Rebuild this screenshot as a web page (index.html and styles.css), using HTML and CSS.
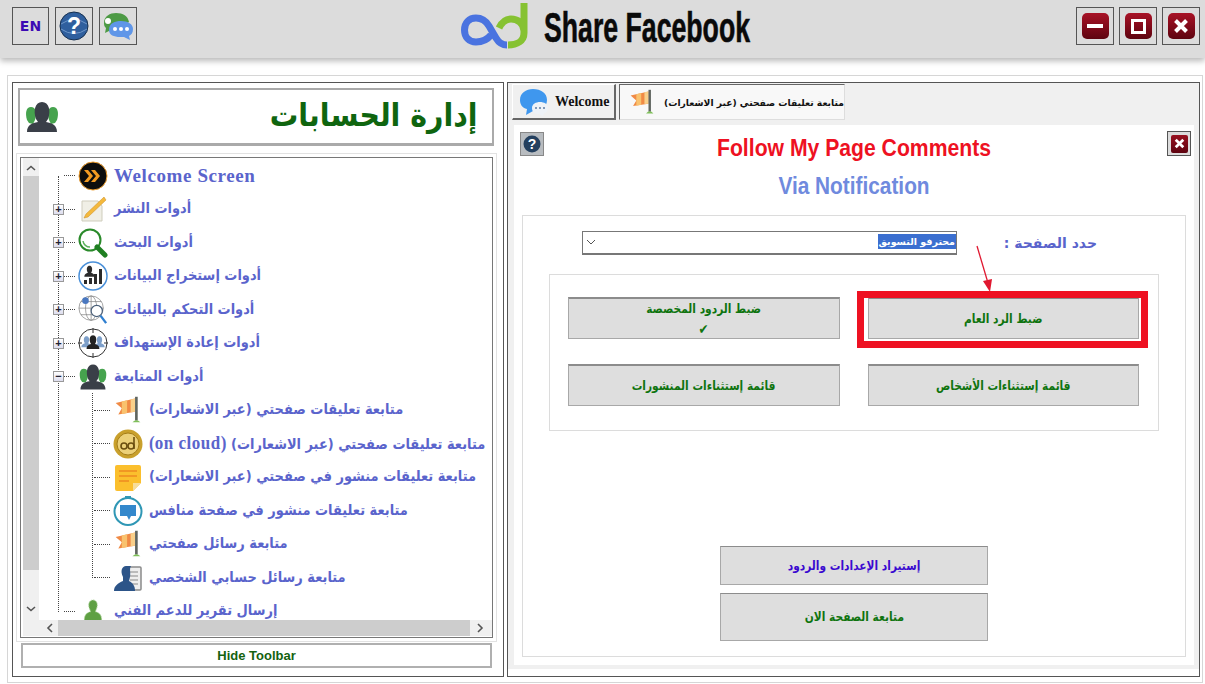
FILE: index.html
```html
<!DOCTYPE html>
<html lang="en">
<head>
  <meta charset="UTF-8">
  <title>Share Facebook</title>
  <link rel="stylesheet" href="styles.css">
</head>
<body>
  <svg class="defs" width="0" height="0">
    <symbol id="flag" viewBox="-2 -1 34 32">
      <path d="M1 7 L23 2 V17 L4 20 L8 13 Z" fill="#f08a45"/>
      <path d="M8 5.500 L14 4 V18.500 L8 19.500 Z" fill="#f9c26e"/>
      <path d="M18 3 L23 2 V17 L18 17.600 Z" fill="#f9d08a"/>
      <path d="M23 0 H26 V27 H23 Z" fill="#5f655f"/>
      <path d="M20 29 Q24.500 24 29 29 Z" fill="#7fc05a"/>
    </symbol>
    <symbol id="people" viewBox="0 0 36 32">
      <path d="M3 19 C1 12 2 6 7 6 C12 6 13 12 11 19 L9 23 L5 22 Z" fill="#46a34e"/>
      <path d="M25 19 C23 12 24 6 29 6 C34 6 35 12 33 19 L31 22 L27 23 Z" fill="#46a34e"/>
      <path d="M12 18 C9 10 11 1 18 1 C25 1 27 10 24 18 L22 21 C28 22 33 24 33 31 H3 C3 24 8 22 14 21 Z" fill="#3a3f48"/>
    </symbol>
    <symbol id="bust" viewBox="0 0 20 20">
      <path d="M6.500 10 C5 5 6.500 1 10 1 C13.500 1 15 5 13.500 10 L12.500 12 C15 13 18 14 18 18 H2 C2 14 5 13 7.500 12 Z"/>
    </symbol>
  </svg>

  <header class="top-bar">
    <div class="top-left">
      <button class="top-btn en-btn">EN</button>
      <button class="top-btn">
        <svg width="30" height="30" viewBox="0 0 30 30">
          <circle cx="15" cy="15" r="14" fill="#2f5f9e" stroke="#17304f"/>
          <path d="M2 13 Q15 4 28 13 M2 18 Q15 27 28 18" fill="none" stroke="#6f97c9"/>
          <text x="15" y="23" class="q-mark" fill="#fff">?</text>
        </svg>
      </button>
      <button class="top-btn">
        <svg width="32" height="30" viewBox="0 0 32 30">
          <path d="M2 12 C2 5 8 2 14 2 C21 2 26 5 27 11 L12 21 L7 20 L3 22 L4 17 C2.500 16 2 14 2 12 Z" fill="#4d9a45"/>
          <circle cx="6" cy="10" r="3" fill="#fff"/>
          <path d="M7 19 C7 12 13 10 19 10 C26 10 31 13 31 18 C31 22 29 24 27 25 L28 29 L22 26 H18 C12 26 7 24 7 19 Z" fill="#5f96e8"/>
          <circle cx="13" cy="18" r="2" fill="#fff"/><circle cx="19" cy="18" r="2" fill="#fff"/><circle cx="25" cy="18" r="2" fill="#fff"/>
        </svg>
      </button>
    </div>
    <div class="brand">
      <svg width="68" height="48" viewBox="0 0 68 48">
        <path d="M30 34 C26 39 21 41 15 41 C8 41 3.500 36 3.500 29 C3.500 22 8 17 15 17 C21 17 25 20 28 25 L35 37 C38 42 41 44 46 44" fill="none" stroke="#4a73e0" stroke-width="7"/>
        <path d="M38 27 C41 21 45 18 50 18 C56 18 63 22 63 30 M63 2 V32 C63 40 56 44 47 44" fill="none" stroke="#86c232" stroke-width="7"/>
      </svg>
      <span class="brand-name">Share Facebook</span>
    </div>
    <div class="top-right">
      <button class="win-btn"><span class="win-face"><span class="win-min"></span></span></button>
      <button class="win-btn"><span class="win-face"><span class="win-max"></span></span></button>
      <button class="win-btn"><span class="win-face">
        <svg width="16" height="16" viewBox="0 0 16 16"><path d="M2.500 2.500 L13.500 13.500 M13.500 2.500 L2.500 13.500" stroke="#fff" stroke-width="4"/></svg>
      </span></button>
    </div>
  </header>

  <main class="desk">
    <aside class="side">
      <div class="side-title">
        <svg width="36" height="32"><use href="#people"/></svg>
        <h1 dir="rtl">إدارة الحسابات</h1>
      </div>

      <div class="tree-box">
        <div class="v-scroll">
          <svg class="chev" width="10" height="6" viewBox="0 0 10 6"><path d="M1 5 L5 1.500 L9 5" fill="none" stroke="#555" stroke-width="1.600"/></svg>
          <div class="v-thumb"></div>
          <svg class="chev" width="10" height="6" viewBox="0 0 10 6"><path d="M1 1 L5 4.500 L9 1" fill="none" stroke="#555" stroke-width="1.600"/></svg>
        </div>

        <div class="tree">
          <div class="row">
            <span class="no-exp"></span><span class="dots"></span>
            <svg class="ico" width="30" height="30" viewBox="0 0 30 30">
              <circle cx="15" cy="15" r="14" fill="#0d0d0d" stroke="#f0a030"/>
              <path d="M6 9 H10 L15 15 L10 21 H6 L11 15 Z M13 9 H17 L22 15 L17 21 H13 L18 15 Z" fill="#f29a22"/>
            </svg>
            <span class="label label-en">Welcome Screen</span>
          </div>
          <div class="row">
            <span class="exp">+</span><span class="dots"></span>
            <svg class="ico" width="30" height="30" viewBox="0 0 30 30">
              <path d="M4 7 H20 L24 12 V27 H4 Z" fill="#f0efe6" stroke="#cfcdbd"/>
              <path d="M26 3 L8 20 L6 24 L10 23 L28 6 Z" fill="#f4b93c" stroke="#c98a20" stroke-width=".5"/>
            </svg>
            <span class="label" dir="rtl">أدوات النشر</span>
          </div>
          <div class="row">
            <span class="exp">+</span><span class="dots"></span>
            <svg class="ico" width="30" height="30" viewBox="0 0 30 30">
              <circle cx="12" cy="12" r="10.500" fill="#fff" stroke="#2a8a2a" stroke-width="2"/>
              <path d="M5 13 A7 7 0 0 0 12 19" fill="none" stroke="#5db35d" stroke-width="1.500"/>
              <path d="M19 19 L27 27" stroke="#1f7f22" stroke-width="5" stroke-linecap="round"/>
            </svg>
            <span class="label" dir="rtl">أدوات البحث</span>
          </div>
          <div class="row">
            <span class="exp">+</span><span class="dots"></span>
            <svg class="ico" width="30" height="30" viewBox="0 0 30 30">
              <circle cx="15" cy="15" r="14" fill="#fff" stroke="#4a90d9" stroke-width="1.500"/>
              <svg x="5" y="4" width="13" height="13" fill="#2b2b2b"><use href="#bust"/></svg>
              <path d="M6 19 H9 V23 H6 Z M11 17 H14 V23 H11 Z M16 13 H19 V23 H16 Z M21 8 H24 V23 H21 Z" fill="#2b2b2b"/>
            </svg>
            <span class="label" dir="rtl">أدوات إستخراج البيانات</span>
          </div>
          <div class="row">
            <span class="exp">+</span><span class="dots"></span>
            <svg class="ico" width="30" height="30" viewBox="0 0 32 32">
              <g fill="none" stroke="#888" stroke-width=".8">
                <circle cx="14" cy="14" r="13"/><ellipse cx="14" cy="14" rx="6" ry="13"/>
                <path d="M1 14 H27 M3 7 H25 M3 21 H25 M14 1 V27"/>
              </g>
              <circle cx="8" cy="6" r="3.500" fill="#4a78c0"/>
              <circle cx="20" cy="17" r="6" fill="#fff" stroke="#4a5f78" stroke-width="1.300"/>
              <path d="M24 22 L30 30" stroke="#2f7fd0" stroke-width="2.500"/>
            </svg>
            <span class="label" dir="rtl">أدوات التحكم بالبيانات</span>
          </div>
          <div class="row">
            <span class="exp">+</span><span class="dots"></span>
            <svg class="ico" width="30" height="30" viewBox="0 0 30 30">
              <circle cx="15" cy="15" r="14" fill="#fff" stroke="#333" stroke-width="1"/>
              <path d="M15 0 V5 M15 25 V30 M0 15 H4 M26 15 H30" stroke="#333"/>
              <svg x="2" y="7" width="13" height="14" fill="#7d9fc9"><use href="#bust"/></svg>
              <svg x="15" y="7" width="13" height="14" fill="#7d9fc9"><use href="#bust"/></svg>
              <svg x="7" y="6" width="16" height="17" fill="#222"><use href="#bust"/></svg>
            </svg>
            <span class="label" dir="rtl">أدوات إعادة الإستهداف</span>
          </div>
          <div class="row">
            <span class="exp">−</span><span class="dots"></span>
            <svg class="ico" width="30" height="30"><use href="#people"/></svg>
            <span class="label" dir="rtl">أدوات المتابعة</span>
          </div>

          <div class="sub-tree">
            <div class="row sub-row">
              <span class="dots"></span>
              <svg class="ico" width="30" height="30"><use href="#flag"/></svg>
              <span class="label" dir="rtl">متابعة تعليقات صفحتي (عبر الاشعارات)</span>
            </div>
            <div class="row sub-row">
              <span class="dots"></span>
              <svg class="ico" width="30" height="30" viewBox="0 0 30 30">
                <circle cx="15" cy="15" r="14.500" fill="#c9a02c"/>
                <circle cx="15" cy="15" r="11" fill="#ecd078" stroke="#a47d18"/>
                <circle cx="11" cy="17" r="3" fill="none" stroke="#6b4e10" stroke-width="1.600"/>
                <circle cx="18" cy="17" r="3" fill="none" stroke="#6b4e10" stroke-width="1.600"/>
                <path d="M21 8 V20" stroke="#6b4e10" stroke-width="1.600"/>
              </svg>
              <span class="label" dir="rtl">متابعة تعليقات صفحتي (عبر الاشعارات) <b class="latin">(on cloud)</b></span>
            </div>
            <div class="row sub-row">
              <span class="dots"></span>
              <svg class="ico" width="30" height="30" viewBox="0 0 30 30">
                <path d="M4 3 Q2 3 2 5 V27 Q2 29 4 29 H20 L28 21 V5 Q28 3 26 3 Z" fill="#fbbf2d"/>
                <path d="M20 29 V21 H28 Z" fill="#f7dd9a"/>
                <path d="M6 9 H24 M6 14 H24 M6 19 H16" stroke="#ee8a20" stroke-width="1.500"/>
              </svg>
              <span class="label" dir="rtl">متابعة تعليقات منشور في صفحتي (عبر الاشعارات)</span>
            </div>
            <div class="row sub-row">
              <span class="dots"></span>
              <svg class="ico" width="30" height="30" viewBox="0 0 30 30">
                <circle cx="15" cy="15.500" r="13.500" fill="#fff" stroke="#2f97b5" stroke-width="2"/>
                <path d="M12 0 H18 V2 H12 Z" fill="#2f97b5"/>
                <path d="M7 9 H23 V20 H18 L16 24 L14 20 H7 Z" fill="#3388cc"/>
              </svg>
              <span class="label" dir="rtl">متابعة تعليقات منشور في صفحة منافس</span>
            </div>
            <div class="row sub-row">
              <span class="dots"></span>
              <svg class="ico" width="30" height="30"><use href="#flag"/></svg>
              <span class="label" dir="rtl">متابعة رسائل صفحتي</span>
            </div>
            <div class="row sub-row">
              <span class="dots"></span>
              <svg class="ico" width="30" height="30" viewBox="0 0 30 30">
                <path d="M14 4 H27 Q28 4 28 5 V26 Q28 27 27 27 H14 Z" fill="#eee" stroke="#8a8a8a" stroke-width="1.500"/>
                <path d="M17 9 H25 M17 13 H25 M17 17 H25 M17 21 H25" stroke="#aaa" stroke-width="1.500"/>
                <path d="M10 14 C7 8 9 3 13 3 H18 C16 6 18 10 17 14 L16 18 C20 20 22 23 22 28 H1 C1 23 5 20 10 18 Z" fill="#2c5488"/>
              </svg>
              <span class="label" dir="rtl">متابعة رسائل حسابي الشخصي</span>
            </div>
          </div>

          <div class="row">
            <span class="no-exp"></span><span class="dots"></span>
            <svg class="ico" width="30" height="30" viewBox="-4 0 38 32">
              <path d="M11 14 C8 8 10 2 15 2 C20 2 22 8 19 14 L18 17 C23 18 26 21 26 28 H4 C4 21 7 18 12 17 Z" fill="#5fa044" stroke="#a6cf92" stroke-dasharray="2 1"/>
            </svg>
            <span class="label" dir="rtl">إرسال تقرير للدعم الفني</span>
          </div>
        </div>

        <div class="h-scroll">
          <svg width="8" height="10" viewBox="0 0 8 10"><path d="M6 1 L2 5 L6 9" fill="none" stroke="#555" stroke-width="1.600"/></svg>
          <div class="h-thumb"></div>
          <svg width="8" height="10" viewBox="0 0 8 10"><path d="M2 1 L6 5 L2 9" fill="none" stroke="#555" stroke-width="1.600"/></svg>
        </div>
      </div>

      <button class="hide-btn">Hide Toolbar</button>
    </aside>

    <section class="work">
      <nav class="tabs">
        <div class="tab tab-welcome">
          <svg width="30" height="30" viewBox="0 0 30 30">
            <path d="M1 13 C1 6 7 2 14 2 C22 2 28 6 28 13 C28 20 22 24 14 24 L7 28 L8 22 C3 21 1 17 1 13 Z" fill="#3f97ee"/>
            <path d="M13 21 C13 17 17 15 21 15 C25 15 29 17 29 21 C29 24 27 26 25 26 L24 29 L20 27 C16 27 13 25 13 21 Z" fill="#eef2f7"/>
            <circle cx="17" cy="21" r="1" fill="#5b7ba5"/><circle cx="21" cy="21" r="1" fill="#5b7ba5"/><circle cx="25" cy="21" r="1" fill="#5b7ba5"/>
          </svg>
          <span>Welcome</span>
        </div>
        <div class="tab tab-active">
          <svg width="32" height="26"><use href="#flag"/></svg>
          <span dir="rtl">متابعة تعليقات صفحتي (عبر الاشعارات)</span>
        </div>
      </nav>

      <div class="pane">
        <div class="pane-head">
          <button class="help-btn">
            <svg width="18" height="18" viewBox="0 0 18 18">
              <circle cx="9" cy="9" r="8.500" fill="#24405f"/>
              <text x="9" y="14" class="q-small" fill="#fff">?</text>
            </svg>
          </button>
          <div class="titles">
            <h2>Follow My Page Comments</h2>
            <h3>Via Notification</h3>
          </div>
          <button class="close-btn"><span class="close-face">
            <svg width="11" height="11" viewBox="0 0 16 16"><path d="M2.500 2.500 L13.500 13.500 M13.500 2.500 L2.500 13.500" stroke="#fff" stroke-width="4"/></svg>
          </span></button>
        </div>

        <div class="form-box">
          <svg class="arrow" width="20" height="50" viewBox="0 0 20 50">
            <path d="M2 1 L13 38" stroke="#e01830" stroke-width="1.300"/>
            <path d="M15 47 L8 36 L17 34 Z" fill="#e01830"/>
          </svg>

          <div class="select-row">
            <div class="fake-select">
              <svg width="10" height="6" viewBox="0 0 10 6"><path d="M1 1 L5 5 L9 1" fill="none" stroke="#555"/></svg>
              <span class="picked" dir="rtl">محترفو التسويق</span>
            </div>
            <label class="select-label" dir="rtl">حدد الصفحة :</label>
          </div>

          <div class="btn-group">
            <button class="act-btn"><span class="squeeze" dir="rtl">ضبط الردود المخصصة<br><span class="check">✔</span></span></button>
            <button class="act-btn marked"><span class="squeeze" dir="rtl">ضبط الرد العام</span></button>
            <button class="act-btn"><span class="squeeze" dir="rtl">قائمة إستثناءات المنشورات</span></button>
            <button class="act-btn"><span class="squeeze" dir="rtl">قائمة إستثناءات الأشخاص</span></button>
          </div>

          <div class="bottom-btns">
            <button class="act-btn import-btn"><span class="squeeze" dir="rtl">إستيراد الإعدادات والردود</span></button>
            <button class="act-btn follow-btn"><span class="squeeze" dir="rtl">متابعة الصفحة الان</span></button>
          </div>
        </div>
      </div>
    </section>
  </main>
</body>
</html>
```

FILE: styles.css
```css
* {
  box-sizing: border-box;
}

html, body {
  height: 100%;
}

body {
  margin: 0;
  overflow: hidden;
  background-color: #fff;
  font-family: "DejaVu Sans", sans-serif;
}

button {
  font-family: inherit;
  padding: 0;
  cursor: pointer;
}

.defs {
  position: absolute;
}

.ico {
  flex: none;
}

/* barre du haut */
.top-bar {
  height: 58px;
  background-color: #dcdcdc;
  box-shadow: 0 3px 6px rgba(0, 0, 0, 0.28);
  display: grid;
  grid-template-columns: 1fr auto 1fr;
  padding: 7px 5px 0 12px;
}

.top-left, .top-right {
  display: flex;
  align-items: flex-start;
}

.top-left {
  gap: 6px;
}

.top-right {
  justify-content: flex-end;
  gap: 5px;
}

.top-btn {
  width: 38px;
  height: 38px;
  background-color: #dcdcdc;
  border: 1px solid #555;
  display: flex;
  align-items: center;
  justify-content: center;
}

.en-btn {
  width: 37px;
  font-size: 14px;
  font-weight: bold;
  color: #3c0ab4;
}

.q-mark {
  font: bold 23px "Liberation Sans", sans-serif;
  text-anchor: middle;
}

.q-small {
  font: bold 14px "Liberation Sans", sans-serif;
  text-anchor: middle;
}

.brand {
  display: flex;
  align-items: flex-start;
  gap: 15px;
  margin-top: -6px;
}

.brand-name {
  width: 207px;
  font-family: "Liberation Sans", sans-serif;
  font-weight: bold;
  font-size: 42px;
  line-height: 54px;
  color: #0a0a0a;
  -webkit-text-stroke: 0.6px #0a0a0a;
  transform: scaleX(0.635);
  transform-origin: left;
  white-space: nowrap;
}

.win-btn {
  width: 38px;
  height: 38px;
  background-color: #dcdcdc;
  border: 1px solid #555;
  display: flex;
  align-items: center;
  justify-content: center;
}

.win-face {
  width: 27px;
  height: 26px;
  border-radius: 5px;
  background: linear-gradient(#a81226, #5e0410);
  display: flex;
  align-items: center;
  justify-content: center;
}

.win-min {
  width: 16px;
  height: 4px;
  background-color: #fff;
}

.win-max {
  width: 15px;
  height: 15px;
  border: 3px solid #fff;
}

/* cadre principal */
.desk {
  margin: 17px 2px 0 7px;
  height: 608px;
  border: 1px solid #d6d6d6;
  padding: 6px 2px 5px 4px;
  display: flex;
  gap: 3px;
}

.side {
  width: 492px;
  border: 1px solid #555;
  padding: 5px 9px 7px 5px;
  display: flex;
  flex-direction: column;
}

.side-title {
  height: 58px;
  border: 2px solid #aaa;
  border-bottom-width: 3px;
  display: flex;
  align-items: center;
  justify-content: space-between;
  padding: 0 14px 0 4px;
}

.side-title h1 {
  margin: 0 0 4px;
  font-size: 32px;
  font-weight: bold;
  color: #0f650f;
  transform: scaleX(0.89);
  transform-origin: right;
}

.tree-box {
  margin: 11px 1px 0 2px;
  height: 481px;
  border: 1px solid #777;
  outline: 1px solid #e2e2e2;
  outline-offset: 3px;
  padding: 0 0 1px 2px;
  display: grid;
  grid-template-columns: 16px 1fr;
  grid-template-rows: 1fr 16px;
}

.v-scroll {
  background-color: #f0f0f0;
  display: flex;
  flex-direction: column;
  align-items: center;
  padding-top: 7px;
  padding-bottom: 24px;
  grid-row: 1 / span 2;
}

.v-thumb {
  width: 100%;
  height: 394px;
  margin: 5px 0 auto;
  background-color: #cdcdcd;
}

.tree {
  position: relative;
  overflow: hidden;
  padding-top: 1px;
  white-space: nowrap;
}

.tree::before {
  content: "";
  position: absolute;
  left: 19px;
  top: 18px;
  height: 436px;
  border-left: 1px dotted #444;
}

.row {
  position: relative;
  height: 33.500px;
  display: flex;
  align-items: center;
  padding-left: 14px;
}

.exp, .no-exp {
  width: 11px;
  height: 11px;
  flex: none;
}

.exp {
  position: relative;
  border: 1px solid #999;
  background: linear-gradient(#fff, #dde);
  font: bold 11px/9px "Liberation Sans", sans-serif;
  color: #223;
  text-align: center;
}

.dots {
  width: 11px;
  margin-right: 3px;
  flex: none;
  border-top: 1px dotted #444;
}

.label {
  margin: 0 0 2px 6px;
  font-size: 14.500px;
  font-weight: bold;
  color: #5a64cc;
  transform: scaleX(0.895);
  transform-origin: left;
}

.label-en {
  margin-bottom: 0;
  transform: none;
}

.label-en, .latin {
  font-family: "Liberation Serif", serif;
  font-size: 19px;
  letter-spacing: 0.6px;
  font-weight: bold;
}

.sub-tree {
  position: relative;
}

.sub-tree::before {
  content: "";
  position: absolute;
  left: 53px;
  top: -1px;
  height: 185px;
  border-left: 1px dotted #444;
}

.sub-row {
  padding-left: 55px;
}

.sub-row .dots {
  width: 16px;
}

.h-scroll {
  background-color: #f0f0f0;
  display: flex;
  align-items: center;
  padding: 0 8px 0 7px;
}

.h-thumb {
  flex: 1;
  height: 100%;
  margin: 0 6px 0 4px;
  background-color: #cdcdcd;
}

.hide-btn {
  margin: 5px 0 0 3px;
  height: 25px;
  width: 471px;
  border: 2px solid #b0b0b0;
  background-color: #fff;
  font-family: "Liberation Sans", sans-serif;
  font-size: 13px;
  font-weight: bold;
  color: #14620f;
}

/* zone de droite */
.work {
  flex: 1;
  border: 1px solid #555;
  background: linear-gradient(#f0f0f0 calc(100% - 7px), #fff 0);
  padding: 0 5px 11px 4px;
  display: flex;
  flex-direction: column;
}

.tabs {
  height: 42px;
  flex: none;
  display: flex;
  gap: 3px;
}

.tab {
  height: 36px;
  margin-top: 1px;
  display: flex;
  align-items: center;
  white-space: nowrap;
}

.tab svg {
  flex: none;
}

.tab-welcome {
  width: 104px;
  gap: 6px;
  padding-left: 6px;
  border-top: 1px solid #fff;
  border-left: 1px solid #fff;
  border-right: 2px solid #666;
  border-bottom: 2px solid #666;
  font: bold 14px "Liberation Serif", serif;
  color: #111;
}

.tab-active {
  width: 226px;
  gap: 6px;
  padding-left: 6px;
  border-top: 1px solid #666;
  border-left: 1px solid #666;
  border-right: 1px solid #ddd;
  border-bottom: 1px solid #ddd;
  background-color: #f8f8f8;
  font-size: 9.200px;
  font-weight: bold;
  color: #111;
}

.pane {
  flex: 1;
  background-color: #fff;
  margin-left: 2px;
  padding: 6px 8px 8px 8px;
  display: flex;
  flex-direction: column;
}

.pane-head {
  height: 84px;
  position: relative;
  flex: none;
}

.titles {
  text-align: center;
  font-family: "Liberation Sans", sans-serif;
}

.titles h2 {
  margin: 4px 0 0;
  font-size: 23px;
  line-height: 26px;
  font-weight: bold;
  color: #ee1122;
  transform: scaleX(0.92);
}

.titles h3 {
  margin: 12px 0 0;
  font-size: 23px;
  line-height: 26px;
  font-weight: bold;
  color: #6f8ade;
  transform: scaleX(0.905);
}

.help-btn {
  position: absolute;
  left: -2px;
  top: 1px;
  width: 24px;
  height: 24px;
  border: 1px solid #888;
  background-color: #b8bcc0;
  display: flex;
  align-items: center;
  justify-content: center;
}

.close-btn {
  position: absolute;
  right: -5px;
  top: 0;
  width: 24px;
  height: 25px;
  border: 1px solid #555;
  background-color: #dcdcdc;
  display: flex;
  align-items: center;
  justify-content: center;
}

.close-face {
  width: 17px;
  height: 18px;
  border-radius: 2px;
  background: linear-gradient(#98101f, #5e0410);
  display: flex;
  align-items: center;
  justify-content: center;
}

.form-box {
  position: relative;
  flex: 1;
  border: 1px solid #dcdcdc;
  padding: 15px 0 15px 26px;
  display: flex;
  flex-direction: column;
}

.arrow {
  position: absolute;
  left: 452px;
  top: 29px;
}

.select-row {
  display: flex;
  align-items: flex-start;
  padding-left: 33px;
}

.fake-select {
  width: 375px;
  height: 24px;
  border: 1px solid #777;
  border-bottom: 2px solid #777;
  display: flex;
  align-items: center;
  justify-content: space-between;
  padding: 0 0 2px 3px;
}

.picked {
  background-color: #3b6fd0;
  color: #fff;
  font-size: 9.500px;
  font-weight: bold;
  line-height: 15px;
  padding: 0 1px;
}

.select-label {
  margin: 4px 0 0 47px;
  width: 93px;
  font-size: 14px;
  font-weight: bold;
  color: #5a64cc;
  white-space: nowrap;
}

.btn-group {
  margin-top: 19px;
  width: 610px;
  height: 157px;
  flex: none;
  border: 1px solid #dcdcdc;
  padding: 22px 19px 0 18px;
  display: grid;
  grid-template-columns: 272px 271px;
  grid-template-rows: 42px 42px;
  column-gap: 28px;
  row-gap: 25px;
}

.act-btn {
  background-color: #dedede;
  border: 1px solid #a8a8a8;
  border-top: 2px solid #8c8c8c;
  font-size: 12.500px;
  font-weight: bold;
  color: #0f740f;
  line-height: 20px;
}

.squeeze {
  display: inline-block;
  transform: scaleX(0.85);
}

.check {
  font-size: 14px;
}

.marked {
  position: relative;
}

.marked::after {
  content: "";
  position: absolute;
  top: -8px;
  left: -12px;
  right: -10px;
  bottom: -10px;
  border: 7px solid #ee1122;
}

.bottom-btns {
  margin: auto 0 0 171px;
  width: 268px;
  display: flex;
  flex-direction: column;
  gap: 8px;
}

.import-btn {
  height: 39px;
  border-top-width: 1px;
  color: #3a0ad0;
}

.follow-btn {
  height: 48px;
  border-top-width: 1px;
}
```
